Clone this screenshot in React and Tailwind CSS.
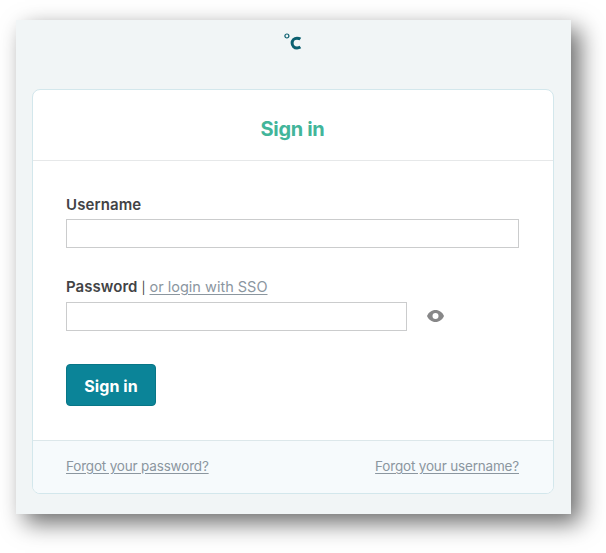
const inputClass = 'block h-[29px] border border-[#cbcccd] bg-white outline-none';
const linkClass = 'text-[#8b969f] underline underline-offset-2';

const Logo = () => (
  <svg width="18" height="19" viewBox="0 0 18 19" fill="none" stroke="#0b6070">
    <circle cx="2.9" cy="3" r="2" strokeWidth="1.200" />
    <path d="M16.400 6.100C15.300 5.400 14.200 5.200 13 5.200a4.900 4.900 0 0 0 0 9.800C14.200 15 15.300 14.800 16.400 14.100" strokeWidth="3" />
  </svg>
);

const EyeIcon = () => (
  <svg width="17" height="12" viewBox="0 0 17 12" fill="none">
    <path
      d="M8.5 0C4.7 0 1.5 2.4 0 6c1.5 3.6 4.7 6 8.5 6S15.5 9.6 17 6C15.5 2.4 12.3 0 8.5 0Z"
      fill="#878788"
    />
    <circle cx="8.5" cy="6" r="3" fill="#fff" />
  </svg>
);

const App = () => {
  return (
    <div className="h-[553px] w-[606px] overflow-hidden bg-white pl-[16px] pt-[20px] font-['Inter','Liberation_Sans',sans-serif] text-[#424345]">
      <main className="flex h-[494px] w-[555px] flex-col bg-[#f1f5f6] px-[16px] shadow-[9px_9px_22px_rgba(0,0,0,0.58)]">
        <div className="flex h-[69px] shrink-0 justify-center pr-[2px] pt-[13px]">
          <Logo />
        </div>

        <form
          className="flex h-[405px] w-[522px] flex-col overflow-hidden rounded-[8px] border border-[#d3e7ec] bg-white"
          onSubmit={(e) => e.preventDefault()}
        >
          <h1 className="flex h-[71px] shrink-0 items-center justify-center border-b border-[#e6e8e9] pr-[1px] pt-[7px] text-[20px] font-bold tracking-[-0.35px] text-[#42b59a]">
            Sign in
          </h1>

          <div className="flex-1 px-[33px] pt-[34px]">
            <label htmlFor="username" className="block h-[24px] text-[15px] font-semibold leading-[20px] tracking-[0.1px]">
              Username
            </label>
            <input id="username" type="text" className={`${inputClass} w-[453px]`} />

            <div className="mt-[29px] flex h-[25px] items-baseline text-[15px] leading-[20px]">
              <label htmlFor="password" className="font-semibold tracking-[0.05px]">Password</label>
              <span className="w-[12px] text-center text-[12px]">|</span>
              <a href="#" className={`${linkClass} text-[14.5px]`}>or login with SSO</a>
            </div>
            <div className="flex items-center">
              <input id="password" type="password" className={`${inputClass} w-[341px]`} />
              <button type="button" aria-label="Show password" className="ml-[20px] pb-[2px]">
                <EyeIcon />
              </button>
            </div>

            <button
              type="submit"
              className="mt-[33px] h-[42px] w-[90px] rounded-[4px] border border-[#087687] bg-[#0b8498] pt-[2px] text-[16px] font-bold tracking-[0.1px] text-white"
            >
              Sign in
            </button>
          </div>

          <div className="flex h-[53px] shrink-0 items-center justify-between border-t border-[#dce7ea] bg-[#f6fafc] pb-[2px] pl-[33px] pr-[34px] text-[13.5px] tracking-[-0.18px]">
            <a href="#" className={linkClass}>Forgot your password?</a>
            <a href="#" className={linkClass}>Forgot your username?</a>
          </div>
        </form>
      </main>
    </div>
  );
};

export default App;
